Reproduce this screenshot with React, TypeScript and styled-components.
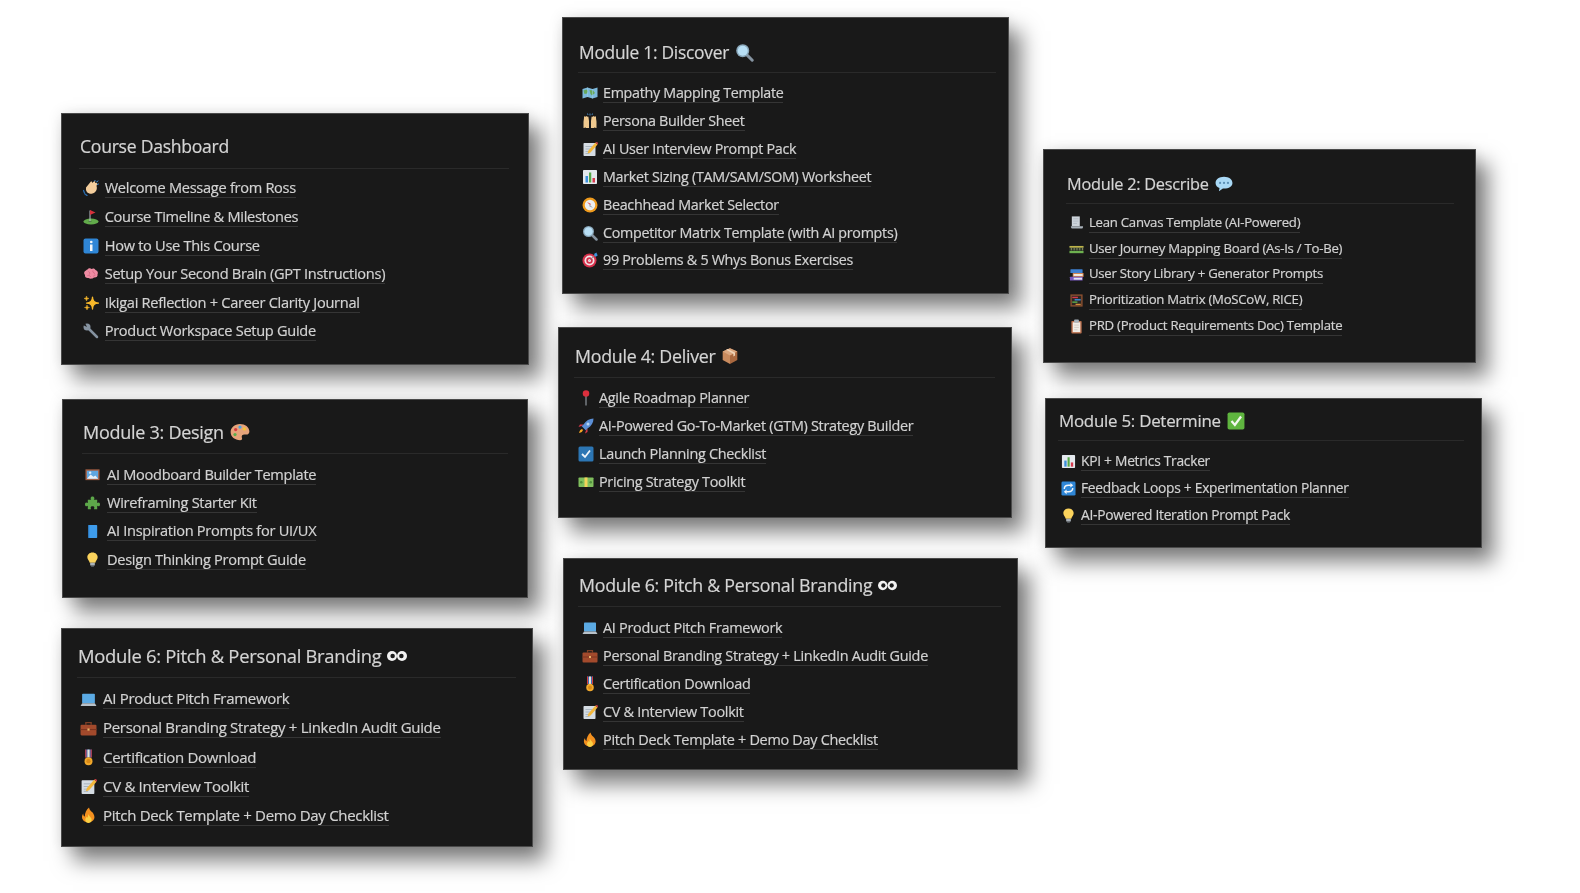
import * as React from 'react';
import styled, { createGlobalStyle } from 'styled-components';

const GlobalStyle = createGlobalStyle`
  html, body {
    margin: 0;
    padding: 0;
    background: #fff;
  }
`;

interface Metrics {
  ml: number;
  mt: number;
  w: number;
  h: number;
  padL: number;
  padR: number;
  padT: number;
  headerH: number;
  titleSize: number;
  emojiSize: number;
  listGap: number;
  pitch: number;
  iconLeft: number;
  iconSize: number;
  textLeft: number;
  textSize: number;
}

const Page = styled.div`
  width: 1580px;
  height: 893px;
  overflow: hidden;
  display: flex;
  padding-left: 61px;
  box-sizing: border-box;
  background: #fff;
  font-family: 'Open Sans', 'Noto Sans', sans-serif;
`;

const Column = styled.div<{ $width: number }>`
  width: ${props => props.$width}px;
  flex: none;
  display: flex;
  flex-direction: column;
  align-items: flex-start;
`;

const Card = styled.section<{ $m: Metrics }>`
  flex: none;
  box-sizing: border-box;
  width: ${props => props.$m.w}px;
  height: ${props => props.$m.h}px;
  margin: ${props => props.$m.mt}px 0 0 ${props => props.$m.ml}px;
  padding: ${props => props.$m.padT}px ${props => props.$m.padR}px 0 ${props => props.$m.padL}px;
  background: #191919;
  border: 1px solid #4a4a4a;
  box-shadow: 12px 14px 20px rgba(0, 0, 0, 0.5), 0 0 14px rgba(0, 0, 0, 0.1);
  filter: blur(0.4px);
`;

const Header = styled.header<{ $m: Metrics }>`
  box-sizing: border-box;
  height: ${props => props.$m.headerH}px;
  padding-left: 1px;
  border-bottom: 1px solid #2a2a2a;
`;

const Title = styled.h2<{ $m: Metrics }>`
  margin: 0;
  display: flex;
  align-items: center;
  gap: 6px;
  height: 24px;
  line-height: 24px;
  font-size: ${props => props.$m.titleSize}px;
  font-weight: 500;
  letter-spacing: -0.015em;
  color: #d4d4d4;
  -webkit-text-stroke: 0.2px #d4d4d4;
  white-space: nowrap;
`;

const List = styled.ul<{ $m: Metrics }>`
  list-style: none;
  margin: ${props => props.$m.listGap}px 0 0;
  padding: 0;
`;

const Row = styled.li<{ $m: Metrics }>`
  position: relative;
  display: flex;
  align-items: center;
  height: ${props => props.$m.pitch}px;
  padding-left: ${props => props.$m.textLeft}px;
`;

const IconSlot = styled.span<{ $m: Metrics }>`
  position: absolute;
  left: ${props => props.$m.iconLeft - props.$m.iconSize / 2}px;
  top: 50%;
  margin-top: ${props => -props.$m.iconSize / 2}px;
  width: ${props => props.$m.iconSize}px;
  height: ${props => props.$m.iconSize}px;
  display: block;
`;

const ItemLink = styled.a<{ $m: Metrics }>`
  color: #d2d2d2;
  -webkit-text-stroke: 0.2px #d2d2d2;
  font-size: ${props => props.$m.textSize}px;
  font-weight: 500;
  letter-spacing: -0.02em;
  line-height: 19px;
  white-space: nowrap;
  text-decoration: none;
  border-bottom: 1px solid #353535;
`;

const star = (x: number, y: number, r: number) =>
  `M${x} ${y - r}Q${x} ${y} ${x + r} ${y}Q${x} ${y} ${x} ${y + r}Q${x} ${y} ${x - r} ${y}Q${x} ${y} ${x} ${y - r}Z`;

const drawings: Record<string, React.ReactNode> = {
  clap: (
    <>
      <path d="M6 15 15 4c2-2 4 0 3 2l4-3c2-1 4 1 2 3l3 0c2 0 2 2 1 3l-1 3c2 5 0 13-8 15-7 2-13-3-13-8 0-2 0-3 0-4z" fill="#f3cd9c" />
      <path d="M23 2l2-2M27 4l3-2M29 9l2-1" stroke="#3d8fd8" strokeWidth="2" strokeLinecap="round" />
      <path d="M1 21l2 5M4 28l4 3" stroke="#2a6db0" strokeWidth="2.6" strokeLinecap="round" />
    </>
  ),
  golf: (
    <>
      <ellipse cx="16" cy="25" rx="15" ry="6" fill="#62ab4b" />
      <ellipse cx="14" cy="25" rx="3" ry="1.2" fill="#2d5a24" />
      <rect x="13" y="3" width="2" height="22" fill="#b9c0c6" />
      <path d="M14 2l11 5-11 5z" fill="#d8313b" />
    </>
  ),
  info: (
    <>
      <rect x="1" y="1" width="30" height="30" rx="4" fill="#2f86d6" />
      <rect x="14" y="13" width="5" height="13" fill="#f2f6fa" />
      <circle cx="16.5" cy="8" r="2.6" fill="#f2f6fa" />
    </>
  ),
  brain: (
    <>
      <path d="M9 7c2-3 6-3 8-1 3-2 7-1 8 2 4 1 6 5 4 9 1 4-3 7-7 6-3 3-8 3-11 1-4 1-8-2-7-6-3-3-2-8 2-9 1-1 2-2 3-2z" fill="#ef8ba2" />
      <path d="M11 11c2 1 3 3 2 6M20 9c-1 3 1 5 4 6M9 19c3-1 5 0 6 3M21 21c0-2 2-3 4-3" stroke="#c95a78" strokeWidth="1.4" fill="none" />
    </>
  ),
  sparkles: (
    <>
      <path d={star(19, 16, 12)} fill="#f9b92a" stroke="#f9b92a" strokeWidth="2.5" strokeLinejoin="round" />
      <path d={star(7, 7, 5)} fill="#f9b92a" stroke="#f9b92a" strokeWidth="1" />
      <path d={star(8, 25, 5)} fill="#f9b92a" stroke="#f9b92a" strokeWidth="1" />
    </>
  ),
  wrench: (
    <>
      <path d="M11 11 28 28" stroke="#8592a0" strokeWidth="5" strokeLinecap="round" />
      <circle cx="8" cy="8" r="7" fill="#8592a0" />
      <path d="M4 0 8 8 0 4z" fill="#191919" />
    </>
  ),
  map: (
    <>
      <path d="M1 8l10-3 10 3 10-3v19l-10 3-10-3-10 3z" fill="#7db9dc" />
      <path d="M3 11l6-2 3 3-2 5-5 1zM15 10l7 1 4 5-6 5-3-3z" fill="#68a85a" />
      <path d="M11 5v19M21 8v19" stroke="#9fd0ea" strokeWidth="1" />
    </>
  ),
  hands: (
    <>
      <path d="M3 30V18c0-3 1-5 1-10 0-2 2-2 3 0 0-3 3-3 3 0 1-2 3-1 3 1l1 7v14H8v-1z" fill="#f0c98e" />
      <path d="M29 30V18c0-3-1-5-1-10 0-2-2-2-3 0 0-3-3-3-3 0-1-2-3-1-3 1l-1 7v14h6v-1z" fill="#f0c98e" />
      <path d="M16 1v4M11 1l1 3M21 1l-1 3" stroke="#4b9be0" strokeWidth="1.6" />
    </>
  ),
  memo: (
    <>
      <rect x="3" y="4" width="24" height="26" rx="1.5" fill="#d5dce3" />
      <path d="M7 11h13M7 16h10M7 21h8M7 25h8" stroke="#9aa6b1" strokeWidth="1.4" />
      <path d="M27 3 13 19l-2 6 6-2L31 7z" fill="#f3b73b" />
      <path d="M27 3l4 4 1-3-2-2z" fill="#dc3d48" />
    </>
  ),
  chart: (
    <>
      <rect x="2" y="2" width="28" height="28" rx="1.5" fill="#e4e9ee" />
      <rect x="7" y="14" width="5" height="13" fill="#3c8fdc" />
      <rect x="14" y="7" width="4.5" height="20" fill="#55a84a" />
      <rect x="21" y="18" width="5" height="9" fill="#d63a4e" />
    </>
  ),
  compass: (
    <>
      <circle cx="16" cy="16" r="15" fill="#ee9a1c" />
      <circle cx="16" cy="16" r="10.5" fill="#eaeef2" />
      <path d="M10 10l8 4-2 2z" fill="#dc3c3c" />
      <path d="M22 22l-8-4 2-2z" fill="#8a97a3" />
    </>
  ),
  search: (
    <>
      <path d="M20 20 29 29" stroke="#8593a0" strokeWidth="5" strokeLinecap="round" />
      <circle cx="13" cy="13" r="11" fill="#8aa7ba" />
      <circle cx="13" cy="13" r="8.5" fill="#b8dff5" />
    </>
  ),
  target: (
    <>
      <circle cx="15" cy="17" r="14" fill="#d6304b" />
      <circle cx="15" cy="17" r="10" fill="#f0e4e6" />
      <circle cx="15" cy="17" r="6.5" fill="#d6304b" />
      <circle cx="15" cy="17" r="3" fill="#f0e4e6" />
      <path d="M15 17 27 5" stroke="#7c8a97" strokeWidth="1.6" />
      <path d="M24 4l5-3 1 4 2 1-5 4z" fill="#3f95e0" />
    </>
  ),
  page: (
    <>
      <path d="M6 3h17v21H6z" fill="#ccd3da" />
      <path d="M9 8h11M9 13h11M9 18h8" stroke="#aab4bd" strokeWidth="1.5" />
      <path d="M4 24h26c0 3-1 5-3 5H8c-3 0-4-2-4-5z" fill="#a9b2ba" />
    </>
  ),
  track: (
    <>
      <rect x="1" y="10" width="30" height="10" fill="#2e3a2a" />
      <rect x="1" y="11" width="30" height="3" fill="#d8c94f" />
      <path d="M5 14v6M11 14v6M17 14v6M23 14v6M29 14v6" stroke="#8f8f6a" strokeWidth="2" />
      <rect x="1" y="21" width="30" height="5" fill="#6db04f" />
    </>
  ),
  books: (
    <>
      <rect x="3" y="5" width="26" height="8" rx="1" fill="#3e80d2" />
      <rect x="8" y="13" width="23" height="8" fill="#e3905c" />
      <rect x="10" y="15" width="19" height="4" fill="#f2efe6" />
      <rect x="2" y="21" width="27" height="8" rx="1" fill="#7b5bc4" />
      <rect x="10" y="23" width="18" height="4" fill="#e6e4f2" />
    </>
  ),
  abacus: (
    <>
      <rect x="3" y="3" width="26" height="26" fill="#8b4f30" />
      <rect x="6" y="6" width="20" height="20" fill="#2d2622" />
      <rect x="7" y="8" width="12" height="3" fill="#d63a4e" />
      <rect x="12" y="13" width="13" height="3" fill="#3c8fdc" />
      <rect x="7" y="18" width="11" height="3" fill="#5cad4c" />
      <rect x="14" y="23" width="11" height="2.4" fill="#e39a3c" />
    </>
  ),
  clipboard: (
    <>
      <rect x="5" y="4" width="22" height="27" rx="2" fill="#b96f4d" />
      <rect x="8" y="7" width="16" height="21" fill="#f1ece6" />
      <rect x="11" y="1" width="10" height="7" rx="1.5" fill="#a8b2ba" />
      <path d="M11 13h10M11 18h10M11 23h7" stroke="#c9c3bb" strokeWidth="1.5" />
    </>
  ),
  picture: (
    <>
      <rect x="1" y="5" width="30" height="23" fill="#a45f43" />
      <rect x="4" y="8" width="24" height="17" fill="#5ea6e0" />
      <path d="M4 25l8-9 6 5 4-3 6 7z" fill="#e9eff5" />
      <circle cx="11" cy="12" r="2.6" fill="#dfeefa" />
    </>
  ),
  puzzle: (
    <path d="M12 5c0-5 8-5 8 0 0 2-1 2-1 3h7v7c1 0 2-1 3-1 4 0 4 8 0 8-1 0-2-1-3-1v7h-7c0-1 1-2 1-3 0-4-8-4-8 0 0 1 1 2 1 3H6v-7c-1 0-2 1-3 1-4 0-4-8 0-8 1 0 2 1 3 1V8h7c0-1-1-1-1-3z" fill="#5da84a" />
  ),
  blueBook: (
    <>
      <rect x="7" y="2" width="19" height="28" rx="1.5" fill="#3e9cec" />
      <rect x="7" y="2" width="2" height="28" fill="#2c78bd" />
    </>
  ),
  bulb: (
    <>
      <path d="M16 1C9 1 5 6 5 11c0 5 4 7 5 12h12c1-5 5-7 5-12 0-5-4-10-11-10z" fill="#fbd35c" />
      <rect x="11" y="23" width="10" height="6" rx="1.5" fill="#a9b1b8" />
      <rect x="13" y="29" width="6" height="2" fill="#7f8890" />
    </>
  ),
  palette: (
    <>
      <path d="M16 3C7 3 1 9 1 16c0 8 7 13 15 13 3 0 4-2 3-4-1-3 1-5 4-5h3c3 0 5-2 5-5 0-7-7-12-15-12z" fill="#e6a37a" />
      <circle cx="9" cy="12" r="2.6" fill="#d8393f" />
      <circle cx="16" cy="8" r="2.6" fill="#4aa3df" />
      <circle cx="23" cy="11" r="2.6" fill="#f4c534" />
      <circle cx="8" cy="20" r="2.6" fill="#5cad4c" />
    </>
  ),
  box: (
    <>
      <path d="M16 2 29 8v15l-13 7z" fill="#a9683f" />
      <path d="M16 2 3 8v15l13 7z" fill="#c98b5e" />
      <path d="M16 2 29 8 16 15 3 8z" fill="#dba77f" />
      <path d="M9 5l13 7v5l3-2v-5L12 3.500z" fill="#f0d4b8" />
    </>
  ),
  pin: (
    <>
      <rect x="15" y="11" width="2" height="20" fill="#a5aeb6" />
      <circle cx="16" cy="7" r="6.500" fill="#dc2f3d" />
    </>
  ),
  rocket: (
    <>
      <path d="M31 1c-8 0-15 4-20 12l-4 3 9 9 3-4C27 16 31 9 31 1z" fill="#5b8fd6" />
      <circle cx="20" cy="12" r="3" fill="#b6d6f2" />
      <path d="M11 13 4 13l-3 5 6-2zM19 21l0 7-5 3 2-6z" fill="#d8394a" />
      <path d="M8 22c-3 1-5 3-6 8 5-1 7-3 8-6z" fill="#f5a623" />
    </>
  ),
  ballot: (
    <>
      <rect x="1" y="1" width="30" height="30" rx="3" fill="#2c76b4" />
      <path d="M8 16l6 6L24 9" stroke="#eef4f9" strokeWidth="3.6" fill="none" />
    </>
  ),
  money: (
    <>
      <rect x="1" y="7" width="30" height="19" rx="1.5" fill="#7fbe5d" />
      <rect x="13" y="7" width="6" height="19" fill="#f3d35a" />
      <circle cx="6.500" cy="16.500" r="2.500" fill="#4f8f3c" />
      <circle cx="25.500" cy="16.500" r="2.500" fill="#4f8f3c" />
    </>
  ),
  laptop: (
    <>
      <rect x="4" y="5" width="24" height="18" rx="1.500" fill="#5baae4" />
      <path d="M4 23h24l3 5H1z" fill="#b8c1c9" />
    </>
  ),
  briefcase: (
    <>
      <path d="M11 9V5h10v4" stroke="#7d3f26" strokeWidth="2.500" fill="none" />
      <rect x="1" y="9" width="30" height="20" rx="2" fill="#a34a2c" />
      <rect x="1" y="17" width="30" height="2" fill="#7d3520" />
      <rect x="14" y="16" width="4" height="4" fill="#e7b267" />
    </>
  ),
  medal: (
    <>
      <rect x="10" y="1" width="12" height="15" fill="#3f6fb8" />
      <rect x="14" y="1" width="4" height="15" fill="#e8e2d6" />
      <path d="M10 1h2v15h-2zM20 1h2v15h-2z" fill="#d8393f" />
      <circle cx="16" cy="23" r="7.500" fill="#f2a92c" />
      <circle cx="16" cy="23" r="4" fill="#d98a17" />
    </>
  ),
  fire: (
    <>
      <path d="M17 1c1 6 5 7 8 11 3 5 3 9 0 13-3 4-14 6-19 0-3-4-3-9 0-13 0 3 1 5 3 6 0-6 3-13 8-17z" fill="#f3901f" />
      <path d="M16 13c0 4 6 6 6 11 0 4-3 6-6 6s-6-2-6-6c0-3 2-4 3-6 1 1 1 2 2 2 0-3 0-5 1-7z" fill="#fbd044" />
    </>
  ),
  eyes: (
    <>
      <circle cx="8" cy="16" r="8" fill="#f2f2f2" />
      <circle cx="24" cy="16" r="8" fill="#f2f2f2" />
      <circle cx="9" cy="16" r="3.600" fill="#1b1b1b" />
      <circle cx="23" cy="16" r="3.600" fill="#1b1b1b" />
    </>
  ),
  loop: (
    <>
      <rect x="1" y="1" width="30" height="30" rx="3" fill="#2f86d6" />
      <path d="M7 17c0-5 3-8 9-8h5M25 15c0 5-3 8-9 8h-5" stroke="#f0f5fa" strokeWidth="3" fill="none" />
      <path d="M20 4l6 5-6 5zM12 18l-6 5 6 5z" fill="#f0f5fa" />
    </>
  ),
  speech: (
    <>
      <path d="M16 3C7 3 1 8 1 14c0 4 3 8 7 9l-1 6 7-5h2c9 0 15-4 15-10S25 3 16 3z" fill="#a9d9f6" />
      <circle cx="9" cy="14" r="2" fill="#5a8fb5" />
      <circle cx="16" cy="14" r="2" fill="#5a8fb5" />
      <circle cx="23" cy="14" r="2" fill="#5a8fb5" />
    </>
  ),
  check: (
    <>
      <rect x="1" y="1" width="30" height="30" rx="3" fill="#5fb53f" />
      <path d="M8 16l6 7L25 8" stroke="#f2f8ee" strokeWidth="4" fill="none" />
    </>
  ),
};

const Emoji = ({ name, size }: { name: string; size: number }) => (
  <svg width={size} height={size} viewBox="0 0 32 32" style={{ display: 'block', flex: 'none' }}>
    {drawings[name]}
  </svg>
);

interface CardData {
  title: string;
  emoji?: string;
  m: Metrics;
  items: [string, string][];
}

const pitchItems: [string, string][] = [
  ['laptop', 'AI Product Pitch Framework'],
  ['briefcase', 'Personal Branding Strategy + LinkedIn Audit Guide'],
  ['medal', 'Certification Download'],
  ['memo', 'CV & Interview Toolkit'],
  ['fire', 'Pitch Deck Template + Demo Day Checklist'],
];

const columns: { width: number; cards: CardData[] }[] = [
  {
    width: 497,
    cards: [
      {
        title: 'Course Dashboard',
        m: { ml: 0, mt: 113, w: 468, h: 252, padL: 17, padR: 19, padT: 20, headerH: 35, titleSize: 17.6, emojiSize: 19, listGap: 5.2, pitch: 28.6, iconLeft: 11.5, iconSize: 16, textLeft: 25.7, textSize: 14.6 },
        items: [
          ['clap', 'Welcome Message from Ross'],
          ['golf', 'Course Timeline & Milestones'],
          ['info', 'How to Use This Course'],
          ['brain', 'Setup Your Second Brain (GPT Instructions)'],
          ['sparkles', 'Ikigai Reflection + Career Clarity Journal'],
          ['wrench', 'Product Workspace Setup Guide'],
        ],
      },
      {
        title: 'Module 3: Design',
        emoji: 'palette',
        m: { ml: 1, mt: 34, w: 466, h: 199, padL: 19, padR: 19, padT: 19.7, headerH: 34.3, titleSize: 18, emojiSize: 20, listGap: 6.7, pitch: 28.3, iconLeft: 10.5, iconSize: 15, textLeft: 25, textSize: 14.6 },
        items: [
          ['picture', 'AI Moodboard Builder Template'],
          ['puzzle', 'Wireframing Starter Kit'],
          ['blueBook', 'AI Inspiration Prompts for UI/UX'],
          ['bulb', 'Design Thinking Prompt Guide'],
        ],
      },
      {
        title: 'Module 6: Pitch & Personal Branding',
        emoji: 'eyes',
        m: { ml: 0, mt: 30, w: 472, h: 219, padL: 15, padR: 16, padT: 15, headerH: 34, titleSize: 18.4, emojiSize: 20, listGap: 6.6, pitch: 29.2, iconLeft: 11.5, iconSize: 17, textLeft: 26, textSize: 15 },
        items: pitchItems,
      },
    ],
  },
  {
    width: 485,
    cards: [
      {
        title: 'Module 1: Discover',
        emoji: 'search',
        m: { ml: 4, mt: 17, w: 447, h: 277, padL: 15, padR: 12, padT: 22, headerH: 33, titleSize: 17.4, emojiSize: 19, listGap: 6.2, pitch: 27.9, iconLeft: 11.5, iconSize: 16, textLeft: 25, textSize: 14.3 },
        items: [
          ['map', 'Empathy Mapping Template'],
          ['hands', 'Persona Builder Sheet'],
          ['memo', 'AI User Interview Prompt Pack'],
          ['chart', 'Market Sizing (TAM/SAM/SOM) Worksheet'],
          ['compass', 'Beachhead Market Selector'],
          ['search', 'Competitor Matrix Template (with AI prompts)'],
          ['target', '99 Problems & 5 Whys Bonus Exercises'],
        ],
      },
      {
        title: 'Module 4: Deliver',
        emoji: 'box',
        m: { ml: 0, mt: 33, w: 454, h: 191, padL: 15, padR: 16, padT: 16, headerH: 34, titleSize: 17.8, emojiSize: 18, listGap: 6.2, pitch: 28, iconLeft: 11.5, iconSize: 16, textLeft: 25, textSize: 14.4 },
        items: [
          ['pin', 'Agile Roadmap Planner'],
          ['rocket', 'AI-Powered Go-To-Market (GTM) Strategy Builder'],
          ['ballot', 'Launch Planning Checklist'],
          ['money', 'Pricing Strategy Toolkit'],
        ],
      },
      {
        title: 'Module 6: Pitch & Personal Branding',
        emoji: 'eyes',
        m: { ml: 5, mt: 40, w: 455, h: 212, padL: 14, padR: 16, padT: 14, headerH: 34, titleSize: 17.8, emojiSize: 19, listGap: 6.6, pitch: 28, iconLeft: 11.5, iconSize: 16, textLeft: 25, textSize: 14.45 },
        items: pitchItems,
      },
    ],
  },
  {
    width: 450,
    cards: [
      {
        title: 'Module 2: Describe',
        emoji: 'speech',
        m: { ml: 0, mt: 149, w: 433, h: 214, padL: 22, padR: 21, padT: 22, headerH: 32, titleSize: 16.3, emojiSize: 18, listGap: 5.7, pitch: 25.9, iconLeft: 10.5, iconSize: 15, textLeft: 23, textSize: 13.2 },
        items: [
          ['page', 'Lean Canvas Template (AI-Powered)'],
          ['track', 'User Journey Mapping Board (As-Is / To-Be)'],
          ['books', 'User Story Library + Generator Prompts'],
          ['abacus', 'Prioritization Matrix (MoSCoW, RICE)'],
          ['clipboard', 'PRD (Product Requirements Doc) Template'],
        ],
      },
      {
        title: 'Module 5: Determine',
        emoji: 'check',
        m: { ml: 2, mt: 35, w: 437, h: 150, padL: 12, padR: 17, padT: 10, headerH: 32, titleSize: 16.9, emojiSize: 18, listGap: 6.7, pitch: 27, iconLeft: 10.5, iconSize: 15, textLeft: 23, textSize: 13.8 },
        items: [
          ['chart', 'KPI + Metrics Tracker'],
          ['loop', 'Feedback Loops + Experimentation Planner'],
          ['bulb', 'AI-Powered Iteration Prompt Pack'],
        ],
      },
    ],
  },
];

export default function App() {
  return (
    <Page>
      <GlobalStyle />
      {columns.map((column, i) => (
        <Column key={i} $width={column.width}>
          {column.cards.map(card => (
            <Card key={card.title + i} $m={card.m}>
              <Header $m={card.m}>
                <Title $m={card.m}>
                  {card.title}
                  {card.emoji && <Emoji name={card.emoji} size={card.m.emojiSize} />}
                </Title>
              </Header>
              <List $m={card.m}>
                {card.items.map(([icon, label]) => (
                  <Row key={label} $m={card.m}>
                    <IconSlot $m={card.m}>
                      <Emoji name={icon} size={card.m.iconSize} />
                    </IconSlot>
                    <ItemLink $m={card.m}>{label}</ItemLink>
                  </Row>
                ))}
              </List>
            </Card>
          ))}
        </Column>
      ))}
    </Page>
  );
}
